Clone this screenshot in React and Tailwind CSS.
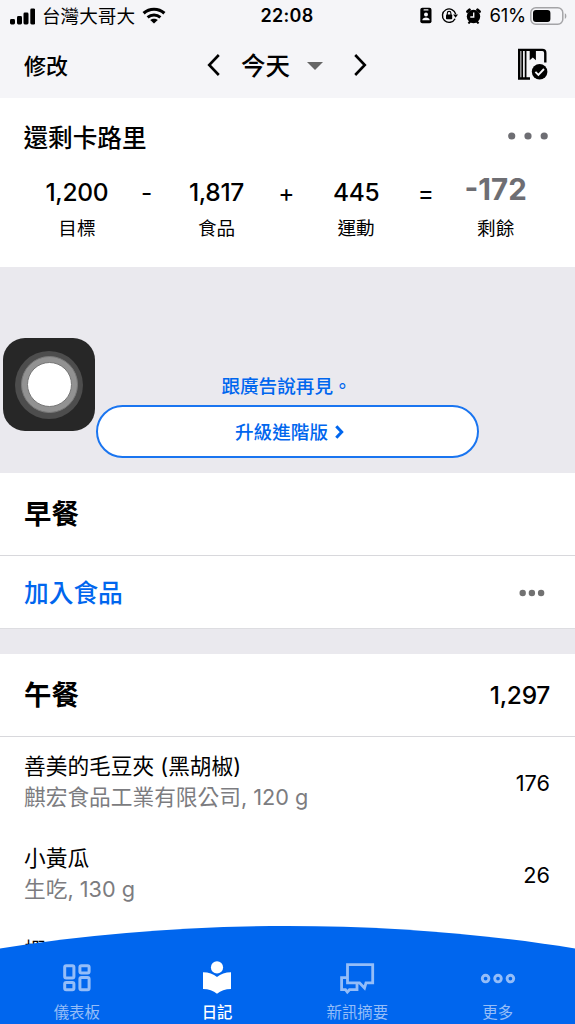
import React, { useState } from 'react';

const comidas = [
  { nombre: '善美的毛豆夾 (黑胡椒)', detalle: '麒宏食品工業有限公司, 120 g', calorias: '176' },
  { nombre: '小黃瓜', detalle: '生吃, 130 g', calorias: '26' },
  { nombre: '蝦', detalle: '', calorias: '' },
];

function StatusBar() {
  return (
    <div className="h-8 shrink-0 flex items-center justify-between pl-[10px] pr-[15px] text-[18.6px] leading-none">
      <div className="flex items-center w-[200px]">
        <svg width="25" height="17" viewBox="0 0 25 17" className="shrink-0">
          <rect x="0" y="11" width="5" height="5.5" rx="1.4" />
          <rect x="7" y="8" width="5" height="8.5" rx="1.4" />
          <rect x="13.5" y="4.5" width="5" height="12" rx="1.4" />
          <rect x="20.3" y="0.5" width="5" height="16" rx="1.4" />
        </svg>
        <span className="ml-[7px] whitespace-nowrap">台灣大哥大</span>
        <svg width="24" height="17" viewBox="0 0 24 17" className="ml-[7px] mt-[-1px] shrink-0">
          <path d="M1.6 6.2C7.6 0.9 16.4 0.9 22.4 6.2" fill="none" stroke="#000" strokeWidth="3.2" />
          <path d="M5.6 10.4C9.3 7.2 14.7 7.2 18.4 10.4" fill="none" stroke="#000" strokeWidth="3" />
          <path d="M12 16.6L8.2 12.9C10.3 11.2 13.7 11.2 15.8 12.9Z" />
        </svg>
      </div>
      <span className="font-semibold text-[18px] tracking-[0.3px] ml-[4px]">22:08</span>
      <div className="flex items-center justify-end w-[200px] pb-px">
        <svg width="12" height="17" viewBox="0 0 12 17" className="shrink-0">
          <rect x="0.3" y="0.8" width="11.2" height="15.4" rx="2" />
          <rect x="3.5" y="2.2" width="5" height="1.4" rx="0.6" fill="#f5f5f8" />
          <circle cx="6" cy="7.5" r="2" fill="#f5f5f8" />
          <path d="M2.3 13.3C2.3 9.6 9.7 9.6 9.7 13.3Z" fill="#f5f5f8" />
        </svg>
        <svg width="17" height="17" viewBox="0 0 17 17" className="ml-[9px] shrink-0">
          <path d="M14.1 11.7A6.7 6.7 0 1 1 14.7 7.2" fill="none" stroke="#000" strokeWidth="1.4" />
          <path d="M12.1 7.5H17L14.6 10.7Z" />
          <rect x="5" y="7.5" width="6.2" height="4.7" rx="0.8" />
          <path d="M6.3 8V6.2a1.8 1.8 0 0 1 3.6 0V8" fill="none" stroke="#000" strokeWidth="1.1" />
        </svg>
        <svg width="15" height="16" viewBox="0 0 15 16" className="ml-[8px] shrink-0">
          <circle cx="7.5" cy="8.5" r="6.7" />
          <path d="M1.5 3.5L3.5 1.8M13.5 3.5L11.5 1.8" stroke="#000" strokeWidth="2.8" strokeLinecap="round" />
          <path d="M2.4 15.4L4.3 13.5M12.6 15.4L10.7 13.5" stroke="#000" strokeWidth="2" />
          <path d="M7.7 4.5V9H4.3" stroke="#f5f5f8" strokeWidth="1.4" fill="none" />
        </svg>
        <span className="ml-[8px] text-[18.5px] tracking-[-0.2px]">61%</span>
        <svg width="37" height="18" viewBox="0 0 37 18" className="ml-[4px] mr-[-7px] shrink-0">
          <rect x="0.8" y="0.8" width="32" height="16.4" rx="5" fill="none" stroke="#a4a4a7" strokeWidth="1.5" />
          <rect x="3" y="3" width="17.4" height="12" rx="3" />
          <path d="M34.8 6.2C36.9 7 36.9 11 34.8 11.8Z" fill="#a4a4a7" />
        </svg>
      </div>
    </div>
  );
}

function Header() {
  return (
    <header className="h-[66px] shrink-0 flex items-center justify-between pl-[25px] pr-[27px]">
      <button className="w-[80px] text-left text-[22px] leading-none font-medium pt-px ml-[-1px]">修改</button>
      <div className="flex items-center ml-[2px]">
        <svg width="13" height="22" viewBox="0 0 13 22" fill="none" stroke="#000" strokeWidth="2.6">
          <path d="M11.8 1L2.2 11L11.8 21" />
        </svg>
        <span className="ml-[21px] text-[24.5px] leading-none font-medium pt-[3px]">今天</span>
        <svg width="16" height="8" viewBox="0 0 16 8" className="ml-[17px] mt-px">
          <path d="M0 0H16L8 8Z" fill="#666" />
        </svg>
        <svg width="13" height="22" viewBox="0 0 13 22" fill="none" stroke="#000" strokeWidth="2.6" className="ml-[31px]">
          <path d="M1.2 1L10.8 11L1.2 21" />
        </svg>
      </div>
      <div className="w-[80px] flex justify-end">
        <svg width="31" height="32" viewBox="0 0 31 32" fill="none" stroke="#000" strokeWidth="2.4" className="mt-[-3px]">
          <path d="M13 30.5H2.2V1.9H25.3Q28.3 1.9 28.3 4.9V14.5" />
          <path d="M5.2 2V30M8.6 2V30" strokeWidth="1.7" />
          <path d="M12.7 1.5H18.9V12.3L15.8 9.5L12.7 12.3Z" fill="#000" stroke="none" />
          <circle cx="22.6" cy="23.7" r="7.8" fill="#000" stroke="none" />
          <path d="M18.4 23.8L21.4 26.8L27 21" stroke="#f5f5f8" strokeWidth="1.9" />
        </svg>
      </div>
    </header>
  );
}

function Cifra({ valor, etiqueta, resto }) {
  return (
    <div className="w-[93px] flex flex-col items-center">
      <div className="h-[34px] flex items-center">
        {resto ? (
          <span className="text-[29.5px] leading-none font-bold text-[#6e6e73] -mt-[6px]">{valor}</span>
        ) : (
          <span className="text-[24.5px] leading-none font-medium tracking-[-0.3px] -mt-[2px]">{valor}</span>
        )}
      </div>
      <span className="mt-[9px] text-[18.6px] leading-none">{etiqueta}</span>
    </div>
  );
}

function Operador({ signo }) {
  return (
    <div className="w-[46.6px] h-[34px] flex items-center justify-center text-[24.5px] leading-none">{signo}</div>
  );
}

function Resumen() {
  return (
    <section className="h-[169px] shrink-0 bg-white">
      <div className="flex items-center justify-between pl-[23.5px] pr-[27px] h-[78px]">
        <h2 className="text-[24.6px] leading-none font-medium pt-[3px]">還剩卡路里</h2>
        <svg width="40" height="8" viewBox="0 0 40 8" fill="#6e6e73" className="-mt-[3px]">
          <circle cx="3.7" cy="4" r="3.6" />
          <circle cx="20" cy="4" r="3.6" />
          <circle cx="36.2" cy="4" r="3.6" />
        </svg>
      </div>
      <div className="flex pl-[30.4px]">
        <Cifra valor="1,200" etiqueta="目標" />
        <Operador signo="-" />
        <Cifra valor="1,817" etiqueta="食品" />
        <Operador signo="+" />
        <Cifra valor="445" etiqueta="運動" />
        <Operador signo="=" />
        <Cifra valor="-172" etiqueta="剩餘" resto />
      </div>
    </section>
  );
}

function Anuncio() {
  return (
    <section className="h-[206px] shrink-0 flex flex-col items-center justify-end pb-[15px] text-[#0066ee] font-medium text-[18.6px] leading-none">
      <p className="mb-[9px] mr-[2px]">跟廣告說再見。</p>
      <button className="w-[383px] h-[53px] rounded-full bg-white border-2 border-[#1a75f0] flex items-center justify-center pt-px pl-1">
        <span>升級進階版</span>
        <svg width="9" height="14" viewBox="0 0 9 14" fill="none" stroke="#0066ee" strokeWidth="3" className="ml-[7px]">
          <path d="M1.3 1.2L6.7 7L1.3 12.8" />
        </svg>
      </button>
    </section>
  );
}

function Comida({ nombre, detalle, calorias }) {
  return (
    <div className="h-[92px] shrink-0 flex items-center justify-between text-[21.7px]">
      <div className="leading-[31px] whitespace-nowrap pb-[2px]">
        <p className="h-[31px]">{nombre}</p>
        <p className="h-[31px] text-[#7c7c80]">{detalle}</p>
      </div>
      <span className="leading-none pt-px">{calorias}</span>
    </div>
  );
}

function BarraInferior({ activo, onCambiar }) {
  const color = (id) => (activo === id ? 'text-white' : 'text-[#94bdf8]');
  const boton = 'w-[140.3px] flex flex-col items-center text-[15.4px] leading-none cursor-pointer';

  return (
    <nav className="absolute bottom-0 left-0 w-[575px] h-[99px] overflow-hidden">
      {/* Curva de fondo */}
      <svg width="575" height="99" viewBox="0 0 575 99" className="absolute inset-0">
        <path d="M0 23.5C185 -6.5 390 -6.5 575 23.5V99H0Z" fill="#0066ee" />
      </svg>
      <div className="relative flex pt-[35px] pl-[6.6px]">
        <button className={`${boton} ${color('panel')}`} onClick={() => onCambiar('panel')}>
          <svg width="36" height="36" viewBox="0 0 36 36" fill="none" stroke="currentColor" strokeWidth="3">
            <rect x="5.7" y="5.7" width="9.2" height="12.2" rx="1.5" />
            <rect x="20.9" y="5.7" width="9.2" height="7.2" rx="1.5" />
            <rect x="5.7" y="22.5" width="9.2" height="7.2" rx="1.5" />
            <rect x="20.9" y="17.5" width="9.2" height="12.2" rx="1.5" />
          </svg>
          <span className="mt-[9px]">儀表板</span>
        </button>
        <button className={`${boton} ${color('diario')}`} onClick={() => onCambiar('diario')}>
          <svg width="36" height="36" viewBox="0 0 36 36" fill="currentColor">
            <circle cx="18" cy="7.4" r="6.1" />
            <path d="M4 12.2Q12.5 12.2 18 17Q23.5 12.2 32 12.2V29Q23.5 29 18 33.8Q12.5 29 4 29Z" />
          </svg>
          <span className="mt-[9px] font-medium">日記</span>
        </button>
        <button className={`${boton} ${color('noticias')}`} onClick={() => onCambiar('noticias')}>
          <svg width="36" height="36" viewBox="0 0 36 36" fill="none" stroke="currentColor" strokeWidth="2.8">
            <path d="M8.5 4.7H33.7V22.8H27L25.5 28L20.5 22.8H8.5Z" />
            <path d="M8.5 17.7H2.6V29.7H6.5L8.3 32L10.5 29.7H18V23" />
          </svg>
          <span className="mt-[9px]">新訊摘要</span>
        </button>
        <button className={`${boton} ${color('mas')}`} onClick={() => onCambiar('mas')}>
          <svg width="36" height="36" viewBox="0 0 36 36" fill="none" stroke="currentColor" strokeWidth="2.9">
            <circle cx="5.6" cy="18.6" r="3.3" />
            <circle cx="18" cy="18.6" r="3.3" />
            <circle cx="30.4" cy="18.6" r="3.3" />
          </svg>
          <span className="mt-[9px]">更多</span>
        </button>
      </div>
    </nav>
  );
}

function App() {
  const [activo, setActivo] = useState('diario');

  return (
    <div className="relative w-[575px] h-[1024px] overflow-hidden flex flex-col bg-[#eae9ee] text-black font-['Inter','Noto_Sans_CJK_TC',sans-serif]">
      <div className="bg-[#f5f5f8] shrink-0">
        <StatusBar />
        <Header />
      </div>

      <Resumen />
      <Anuncio />

      {/* Desayuno */}
      <section className="shrink-0 bg-white border-b border-[#dddde1]">
        <div className="h-[83px] px-6 flex items-center border-b border-[#d8d8dc]">
          <h3 className="text-[27.4px] leading-none font-bold pt-[2px]">早餐</h3>
        </div>
        <div className="h-[72px] pl-6 pr-[30px] flex items-center justify-between">
          <button className="text-[24.7px] leading-none font-medium text-[#0066ee] pt-[3px]">加入食品</button>
          <svg width="26" height="8" viewBox="0 0 26 8" fill="#717171" className="mt-px">
            <circle cx="3.7" cy="4" r="3.2" />
            <circle cx="12.9" cy="4" r="3.2" />
            <circle cx="22.1" cy="4" r="3.2" />
          </svg>
        </div>
      </section>

      {/* Almuerzo */}
      <section className="mt-[25px] shrink-0 bg-white">
        <div className="h-[83px] pl-6 pr-[25px] flex items-center justify-between border-b border-[#d8d8dc]">
          <h3 className="text-[27.4px] leading-none font-bold pt-[2px]">午餐</h3>
          <span className="text-[24.5px] leading-none font-medium tracking-[-0.3px]">1,297</span>
        </div>
        <div className="pl-6 pr-[25px]">
          {comidas.map((c) => (
            <Comida key={c.nombre} {...c} />
          ))}
        </div>
      </section>

      <BarraInferior activo={activo} onCambiar={setActivo} />

      {/* Botón flotante de asistencia */}
      <div className="absolute left-[3px] top-[338px] w-[92px] h-[93px] rounded-[22px] bg-[#272727] flex items-center justify-center">
        <div className="w-[68px] h-[68px] rounded-full bg-[#4d4d4d] flex items-center justify-center">
          <div className="w-[57px] h-[57px] rounded-full bg-[#929292] border border-[#7a7a7a] flex items-center justify-center">
            <div className="w-[45px] h-[45px] rounded-full bg-white border border-[#777]" />
          </div>
        </div>
      </div>
    </div>
  );
}

export default App;
